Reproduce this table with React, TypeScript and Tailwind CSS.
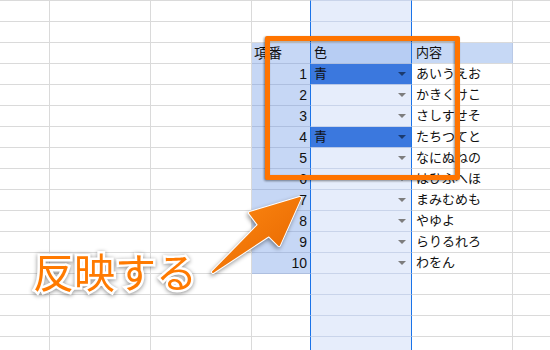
import React from "react";

const kana = [
  "あいうえお",
  "かきくけこ",
  "さしすせそ",
  "たちつてと",
  "なにぬねの",
  "はひふへほ",
  "まみむめも",
  "やゆよ",
  "らりるれろ",
  "わをん",
];

const selected = new Set([1, 4]);

function Tri({ dark }: { dark?: boolean }) {
  return (
    <span
      className={
        "inline-block w-0 h-0 border-l-[4px] border-r-[4px] border-t-[4px] border-l-transparent border-r-transparent " +
        (dark ? "border-t-[#1b3a6e]" : "border-t-[#7d7d7d]")
      }
    />
  );
}

function Row({ kind, n }: { kind: "empty" | "header" | "data"; n?: number }) {
  const plain = "h-[21px] border-r border-b border-[#dadada] shrink-0";
  const isSel = kind === "data" && n !== undefined && selected.has(n);
  return (
    <div className="flex">
      <div className={plain + " w-[50px]"} />
      <div className={plain + " w-[101px]"} />
      <div className={plain + " w-[101px]"} />
      {/* 項番 */}
      {kind === "empty" ? (
        <div className="h-[21px] w-[59px] shrink-0 border-b border-[#dadada] border-r border-r-[#1a73e8]" />
      ) : (
        <div
          className={
            "h-[21px] w-[59px] shrink-0 bg-[#c6d7f5] border-b border-b-[#aebfdf] border-r border-r-[#1a73e8] flex items-center text-[14px] leading-[20px] text-[#111] " +
            (kind === "header" ? "justify-start pl-[2px] text-[13px]" : "justify-end pr-[3px]")
          }
        >
          {kind === "header" ? "項番" : n}
        </div>
      )}
      {/* 色 */}
      <div
        className={
          "h-[21px] w-[101px] shrink-0 border-b border-r border-r-[#1a73e8] flex items-center justify-between pl-[3px] pr-[5px] text-[13px] leading-[20px] text-[#111] " +
          (kind === "header"
            ? "bg-[#b7cdf3] border-b-[#aebfdf]"
            : isSel
            ? "bg-[#3b78de] border-b-[#b9c8e6]"
            : "bg-[#e6edfb] border-b-[#c9d4ea]")
        }
      >
        <span>{kind === "header" ? "色" : isSel ? "青" : ""}</span>
        {kind === "data" && <Tri dark={isSel} />}
      </div>
      {/* 内容 */}
      <div
        className={
          "h-[21px] w-[101px] shrink-0 border-r border-b border-[#dadada] flex items-center pl-[4px] text-[13px] leading-[20px] text-[#111] " +
          (kind === "header" ? "bg-[#c6d8f5] border-r-[#b9c9e6]" : "")
        }
      >
        {kind === "header" ? "内容" : kind === "data" && n ? kana[n - 1] : ""}
      </div>
      <div className={plain + " w-[60px]"} />
    </div>
  );
}

export default function App() {
  const rows: { kind: "empty" | "header" | "data"; n?: number }[] = [];
  for (let i = 0; i < 18; i++) {
    if (i === 3) rows.push({ kind: "header" });
    else if (i >= 4 && i <= 13) rows.push({ kind: "data", n: i - 3 });
    else rows.push({ kind: "empty" });
  }
  return (
    <div
      className="relative w-[550px] h-[350px] overflow-hidden bg-white"
      style={{ fontFamily: '"Liberation Sans", "Noto Sans CJK JP", sans-serif' }}
    >
      <div className="mt-[-20px]">
        {rows.map((r, i) => (
          <Row key={i} kind={r.kind} n={r.n} />
        ))}
      </div>

      {/* orange highlight box */}
      <div className="absolute left-[265px] top-[36px] w-[195px] h-[144px] border-[5px] border-[#ff7400] rounded-[2px] drop-shadow-[-1px_1px_1px_rgba(0,0,0,0.45)]" />

      {/* arrow */}
      <svg
        className="absolute left-0 top-0 drop-shadow-[-1px_2px_2px_rgba(0,0,0,0.4)]"
        width="550"
        height="350"
        viewBox="0 0 550 350"
      >
        <defs>
          <linearGradient id="ag" x1="0" y1="0" x2="1" y2="1">
            <stop offset="0" stopColor="#ff8a12" />
            <stop offset="1" stopColor="#e56500" />
          </linearGradient>
        </defs>
        <polygon
          points="213,272 259,225 250,213 300,198 279,245 269,235"
          fill="url(#ag)"
          stroke="#ffffff"
          strokeWidth="4"
          strokeLinejoin="round"
        />
        <polygon
          points="213,272 259,225 250,213 300,198 279,245 269,235"
          fill="url(#ag)"
          stroke="url(#ag)"
          strokeWidth="2"
          strokeLinejoin="round"
        />
      </svg>

      {/* label */}
      <div
        className="absolute left-[33px] top-[245px] text-[41px] leading-[50px] font-normal text-[#ff7a00] [paint-order:stroke_fill] [-webkit-text-stroke:5px_white] drop-shadow-[0_1px_2px_rgba(0,0,0,0.45)] whitespace-nowrap"
        style={{ fontFamily: '"Noto Sans CJK JP", sans-serif' }}
      >
        反映する
      </div>
    </div>
  );
}
